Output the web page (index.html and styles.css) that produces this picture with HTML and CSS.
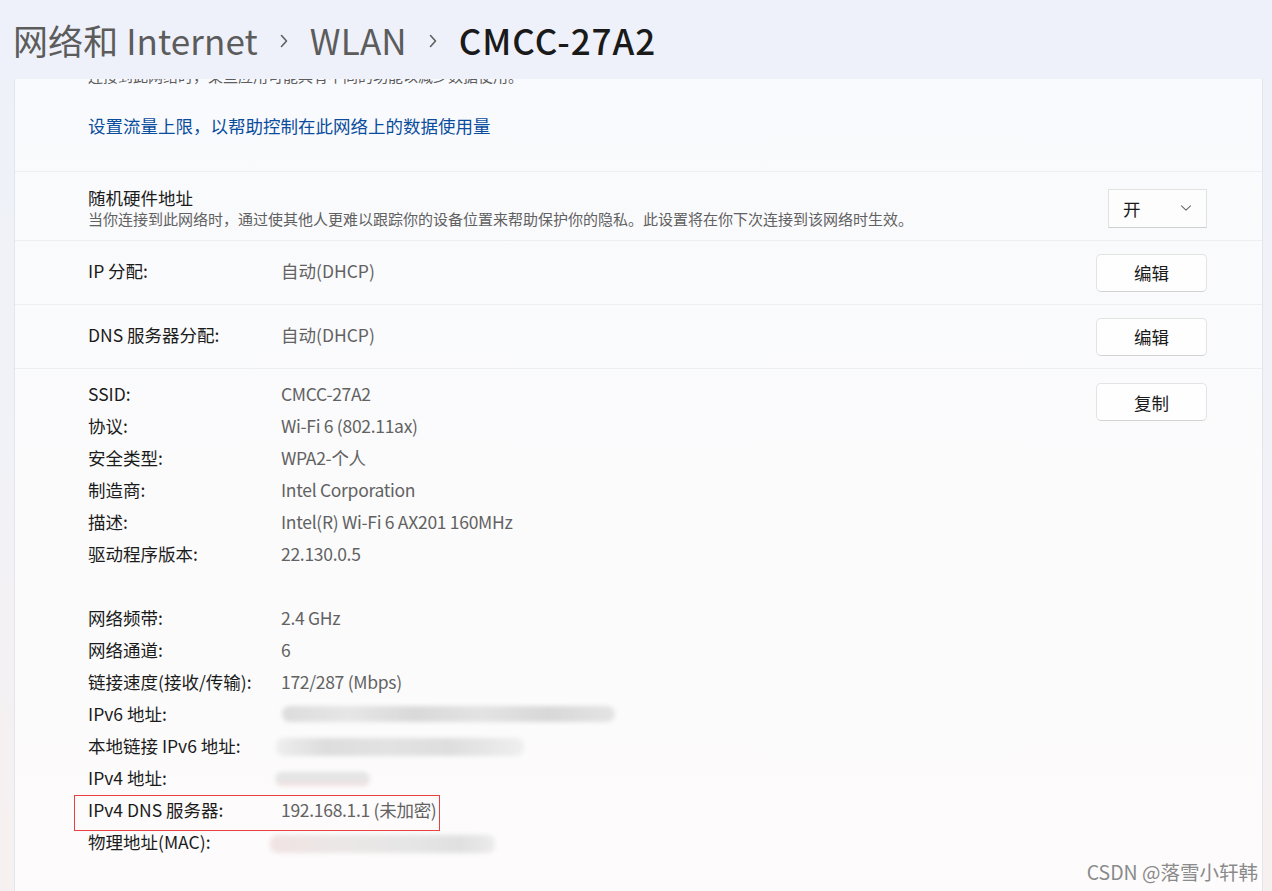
FILE: index.html
```html
<!DOCTYPE html>
<html lang="zh-CN">
<head>
<meta charset="utf-8">
<title>CMCC-27A2</title>
<link rel="stylesheet" href="styles.css">
</head>
<body>
<header class="page-header">
  <span class="crumb">网络和 Internet</span>
  <svg class="crumb-sep" width="10" height="14" viewBox="0 0 10 14"><path d="M2.5 1.5 L7.5 7 L2.5 12.5" fill="none" stroke="#5f5f5f" stroke-width="1.6" stroke-linecap="round" stroke-linejoin="round"/></svg>
  <span class="crumb">WLAN</span>
  <svg class="crumb-sep" width="10" height="14" viewBox="0 0 10 14"><path d="M2.5 1.5 L7.5 7 L2.5 12.5" fill="none" stroke="#5f5f5f" stroke-width="1.6" stroke-linecap="round" stroke-linejoin="round"/></svg>
  <span class="crumb crumb-current">CMCC-27A2</span>
</header>

<main class="card">
  <section class="sec sec-usage">
    <p class="cut-text">连接到此网络时，某些应用可能具有不同的功能以减少数据使用。</p>
    <a class="link" href="#">设置流量上限，以帮助控制在此网络上的数据使用量</a>
  </section>

  <section class="sec row row-random">
    <div class="info">
      <div class="info-title">随机硬件地址</div>
      <div class="info-desc">当你连接到此网络时，通过使其他人更难以跟踪你的设备位置来帮助保护你的隐私。此设置将在你下次连接到该网络时生效。</div>
    </div>
    <div class="dropdown">
      <span>开</span>
      <svg width="12" height="8" viewBox="0 0 12 8"><path d="M1.5 1.8 L6 6.2 L10.5 1.8" fill="none" stroke="#6a6a6a" stroke-width="1.1" stroke-linecap="round" stroke-linejoin="round"/></svg>
    </div>
  </section>

  <section class="sec row row-setting">
    <span class="label">IP 分配:</span>
    <span class="value">自动(DHCP)</span>
    <button class="btn">编辑</button>
  </section>

  <section class="sec row row-setting">
    <span class="label">DNS 服务器分配:</span>
    <span class="value">自动(DHCP)</span>
    <button class="btn">编辑</button>
  </section>

  <section class="sec details">
    <div class="props">
      <span class="label">SSID:</span><span class="value">CMCC-27A2</span>
      <span class="label">协议:</span><span class="value">Wi-Fi 6 (802.11ax)</span>
      <span class="label">安全类型:</span><span class="value">WPA2-个人</span>
      <span class="label">制造商:</span><span class="value">Intel Corporation</span>
      <span class="label">描述:</span><span class="value">Intel(R) Wi-Fi 6 AX201 160MHz</span>
      <span class="label">驱动程序版本:</span><span class="value">22.130.0.5</span>
      <span class="spacer"></span>
      <span class="label">网络频带:</span><span class="value">2.4 GHz</span>
      <span class="label">网络通道:</span><span class="value">6</span>
      <span class="label">链接速度(接收/传输):</span><span class="value">172/287 (Mbps)</span>
      <span class="label">IPv6 地址:</span><span class="value"><span class="redact redact-ipv6"></span></span>
      <span class="label">本地链接 IPv6 地址:</span><span class="value"><span class="redact redact-local"></span></span>
      <span class="label">IPv4 地址:</span><span class="value"><span class="redact redact-ipv4"></span></span>
      <span class="label highlight-row">IPv4 DNS 服务器:<span class="highlight-box"></span></span><span class="value">192.168.1.1 (未加密)</span>
      <span class="label">物理地址(MAC):</span><span class="value"><span class="redact redact-mac"></span></span>
    </div>
    <button class="btn btn-copy">复制</button>
  </section>
</main>

<div class="watermark">CSDN @落雪小轩韩</div>
</body>
</html>
```

FILE: styles.css
```css
html, body {
  margin: 0;
  height: 100%;
  overflow: hidden;
}

body {
  position: relative;
  display: flex;
  flex-direction: column;
  font-family: "Noto Sans CJK SC", "Noto Sans", sans-serif;
  color: #1b1b1b;
  background: linear-gradient(to bottom, #eef1f9 0%, #f1f2f7 50%, #f7f0f0 100%);
}

/* ---------- header ---------- */
.page-header {
  flex: 0 0 79px;
  display: flex;
  align-items: center;
  gap: 21px;
  padding: 0 0 0 13px;
  box-sizing: border-box;
  font-size: 35px;
  line-height: 44px;
  position: relative;
  z-index: 2;
  background: #eef1f9;
}

.crumb {
  color: #5c5c5c;
  letter-spacing: 0.1px;
}

.crumb-current {
  color: #1a1a1a;
  font-weight: 500;
  letter-spacing: 1px;
}

.crumb-sep {
  flex: none;
  margin-top: 2px;
}

/* ---------- card ---------- */
.card {
  flex: 1;
  margin: 0 9px 0 14px;
  border-left: 1px solid #e3e5ea;
  border-right: 1px solid #e3e5ea;
  background: linear-gradient(to bottom, #f9fafd 0%, #fbfbfc 50%, #fdfbfb 100%);
  overflow: hidden;
  font-size: 17.5px;
}

.sec {
  padding: 0 55px 0 73px;
  border-bottom: 1px solid #eceef2;
}

.sec-usage {
  padding-bottom: 33px;
}

.cut-text {
  margin: -15px 0 0;
  line-height: 24px;
  font-size: 15px;
  color: #5d5d5d;
}

.link {
  display: block;
  margin-top: 26px;
  line-height: 24px;
  color: #0a4d9e;
  text-decoration: none;
}

.row {
  display: flex;
  align-items: center;
}

.row-random {
  padding-top: 15px;
  padding-bottom: 11px;
  justify-content: space-between;
}

.info-title {
  line-height: 22px;
  color: #1b1b1b;
}

.info-desc {
  line-height: 20px;
  font-size: 15px;
  color: #616161;
}

.dropdown {
  width: 99px;
  height: 39px;
  box-sizing: border-box;
  display: flex;
  align-items: center;
  justify-content: space-between;
  padding: 0 14px 0 14px;
  background: #fdfdfd;
  border: 1px solid #e2e2e2;
  border-bottom-color: #cfcfcf;
  color: #1b1b1b;
}

.row-setting {
  min-height: 63px;
}

.label {
  width: 193px;
  flex: none;
  color: #1b1b1b;
}

.value {
  color: #626262;
}

.row-setting .value {
  flex: 1;
  margin-top: -5px;
}

.row-setting .label {
  margin-top: -5px;
}

.btn {
  width: 111px;
  height: 38px;
  flex: none;
  font: inherit;
  font-size: 17.5px;
  color: #1b1b1b;
  background: #fefefe;
  border: 1px solid #e3e3e3;
  border-bottom-color: #d2d2d2;
  border-radius: 5px;
  padding: 0;
}

/* ---------- details ---------- */
.details {
  display: flex;
  align-items: flex-start;
  padding-top: 8px;
  border-bottom: none;
}

.props {
  flex: 1;
  display: grid;
  grid-template-columns: 193px 1fr;
  grid-auto-rows: 32px;
  align-items: center;
}

.props .label {
  width: auto;
}

.props .value {
  letter-spacing: -0.3px;
}

.spacer {
  grid-column: 1 / -1;
}

.btn-copy {
  margin-top: 6px;
}

.highlight-row {
  position: relative;
}

.highlight-box {
  position: absolute;
  left: -14px;
  top: -2px;
  width: 366px;
  height: 36px;
  box-sizing: border-box;
  border: 1px solid #e8403f;
}

.redact {
  display: inline-block;
  vertical-align: middle;
  filter: blur(2px);
  border-radius: 8px;
}

.redact-ipv6 {
  width: 333px;
  height: 16px;
  margin: -3px 0 0 1px;
  background: linear-gradient(to right, #dcdcdc, #e6e6e6 20%, #d9d9d9 40%, #e3e3e3 60%, #d8d8d8 80%, #e4e4e4);
}

.redact-local {
  width: 248px;
  height: 18px;
  margin: -2px 0 0 -5px;
  background: linear-gradient(to right, #eeeeee, #dddddd 20%, #e2e2e2 45%, #dedede 70%, #efefef);
}

.redact-ipv4 {
  width: 95px;
  height: 14px;
  margin: -2px 0 0 -6px;
  background: linear-gradient(to bottom, #e3e3e3 0%, #e8e6e6 65%, #f4dede 100%);
}

.redact-mac {
  width: 225px;
  height: 18px;
  margin: 0 0 0 -11px;
  background: linear-gradient(to right, #f1e3e3, #ece7e7 30%, #e6e6e6 60%, #e0e0e0 85%, #ececec);
}

/* ---------- watermark ---------- */
.watermark {
  position: absolute;
  right: 14px;
  bottom: 7px;
  font-size: 19.5px;
  line-height: 24px;
  color: #8a8a8a;
  text-shadow: 0 0 2px #ffffff, 0 0 1px #ffffff;
}
```
